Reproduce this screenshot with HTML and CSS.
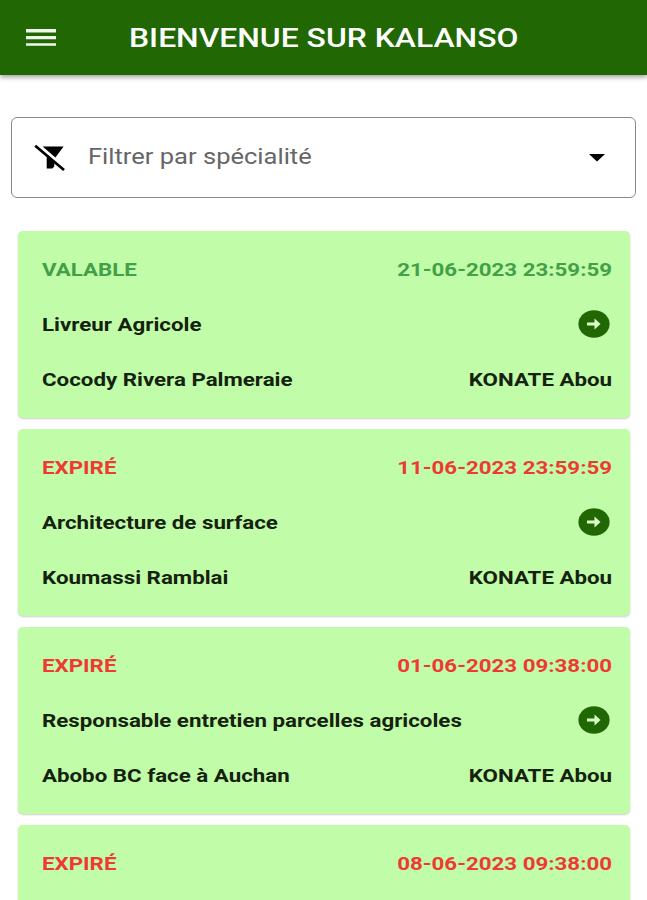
FILE: index.html
```
<!DOCTYPE html>
<html lang="fr">
<head>
  <meta charset="UTF-8" />
  <meta name="viewport" content="width=device-width, initial-scale=1.0" />
  <title>Kalanso</title>
  <link rel="stylesheet" href="styles.css">
</head>
<body>
  <!-- shared arrow icon -->
  <svg class="sprite" width="0" height="0">
    <symbol id="arrow" viewBox="0 0 32 28" preserveAspectRatio="none">
      <ellipse cx="16" cy="14" rx="15.6" ry="13.8" fill="#216804" />
      <path d="M9 12.6h7.5V8.6L22.5 14l-6 5.4v-4H9z" fill="#dcffc8" />
    </symbol>
  </svg>

  <header class="topbar">
    <svg class="menu" viewBox="0 0 30 18">
      <path d="M0 0h30v3.6H0zM0 7h30v3.2H0zM0 14.2h30v2.6H0z" fill="#f0f8ec" />
    </svg>
    <h1><span class="wide">BIENVENUE SUR KALANSO</span></h1>
  </header>

  <main>
    <div class="filter">
      <svg class="filter-icon" viewBox="0 0 32 28">
        <path d="M8.6 2.6h21L21.4 13.4zM12.7 10.5l7.6 6.6v5.4l-2 2h-5.6z" />
        <path d="M1.2 1.8L30 26" fill="none" stroke="#000" stroke-width="2.8" />
      </svg>
      <span class="label"><span class="wide">Filtrer par spécialité</span></span>
      <svg class="caret" viewBox="0 0 16 8"><path d="M0 0h16L8 7.6z" /></svg>
    </div>

    <div class="list">
      <article class="card">
        <div class="row valid"><span class="wide">VALABLE</span><span class="wide end">21-06-2023 23:59:59</span></div>
        <div class="row"><span class="wide">Livreur Agricole</span><svg class="go"><use href="#arrow" /></svg></div>
        <div class="row"><span class="wide">Cocody Rivera Palmeraie</span><span class="wide end">KONATE Abou</span></div>
      </article>
      <article class="card">
        <div class="row expired"><span class="wide">EXPIRÉ</span><span class="wide end">11-06-2023 23:59:59</span></div>
        <div class="row"><span class="wide">Architecture de surface</span><svg class="go"><use href="#arrow" /></svg></div>
        <div class="row"><span class="wide">Koumassi Ramblai</span><span class="wide end">KONATE Abou</span></div>
      </article>
      <article class="card">
        <div class="row expired"><span class="wide">EXPIRÉ</span><span class="wide end">01-06-2023 09:38:00</span></div>
        <div class="row"><span class="wide">Responsable entretien parcelles agricoles</span><svg class="go"><use href="#arrow" /></svg></div>
        <div class="row"><span class="wide">Abobo BC face à Auchan</span><span class="wide end">KONATE Abou</span></div>
      </article>
      <article class="card">
        <div class="row expired"><span class="wide">EXPIRÉ</span><span class="wide end">08-06-2023 09:38:00</span></div>
      </article>
    </div>
  </main>
</body>
</html>
```
FILE: styles.css
```
* {
  box-sizing: border-box;
}

body {
  margin: 0;
  height: 900px;
  overflow: hidden;
  background: #fff;
  font-family: Roboto, "Liberation Sans", sans-serif;
  color: #14220e;
}

main {
  height: 825px;
  overflow: hidden;
}

.sprite {
  display: block;
}

/* the interface uses widened lettering */
.wide {
  display: inline-block;
  white-space: nowrap;
  transform: scaleX(1.174);
  transform-origin: left center;
}

.wide.end {
  transform-origin: right center;
}

.topbar {
  position: relative;
  display: flex;
  align-items: center;
  height: 75px;
  padding: 0 26px;
  background: #216804;
  box-shadow: 0 2px 5px rgba(0, 0, 0, 0.4);
}

.menu {
  width: 30px;
  height: 18px;
}

h1 {
  margin: 0 0 0 73px;
  font-size: 26px;
  line-height: 30px;
  font-weight: 500;
  color: #fff;
}

h1 .wide {
  transform: scaleX(1.225);
}

.filter {
  display: flex;
  align-items: center;
  height: 81px;
  margin: 42px 11px 0;
  padding: 0 30px 0 22px;
  border: 1px solid #8a8a8a;
  border-radius: 6px;
}

.filter-icon {
  width: 32px;
  height: 28px;
}

.label {
  flex: 1;
  margin-left: 22px;
  padding-bottom: 2px;
  font-size: 22px;
  color: #666;
}

.label .wide {
  transform: scaleX(1.16);
}

.caret {
  width: 16px;
  height: 8px;
}

.list {
  display: flex;
  flex-direction: column;
  gap: 11px;
  margin: 33px 17px 0 18px;
}

.card {
  flex-shrink: 0;
  height: 187px;
  padding: 11px 18px 0 24px;
  background: #c1fca9;
  border-radius: 5px;
  box-shadow: 0 1px 2px rgba(0, 0, 0, 0.2);
}

.row {
  display: flex;
  align-items: center;
  justify-content: space-between;
  height: 55px;
  font-size: 19px;
  font-weight: 700;
}

.valid {
  color: #43a047;
}

.expired {
  color: #ee3a35;
}

.go {
  width: 32px;
  height: 28px;
  margin: 0 2px 1px 0;
}
```
